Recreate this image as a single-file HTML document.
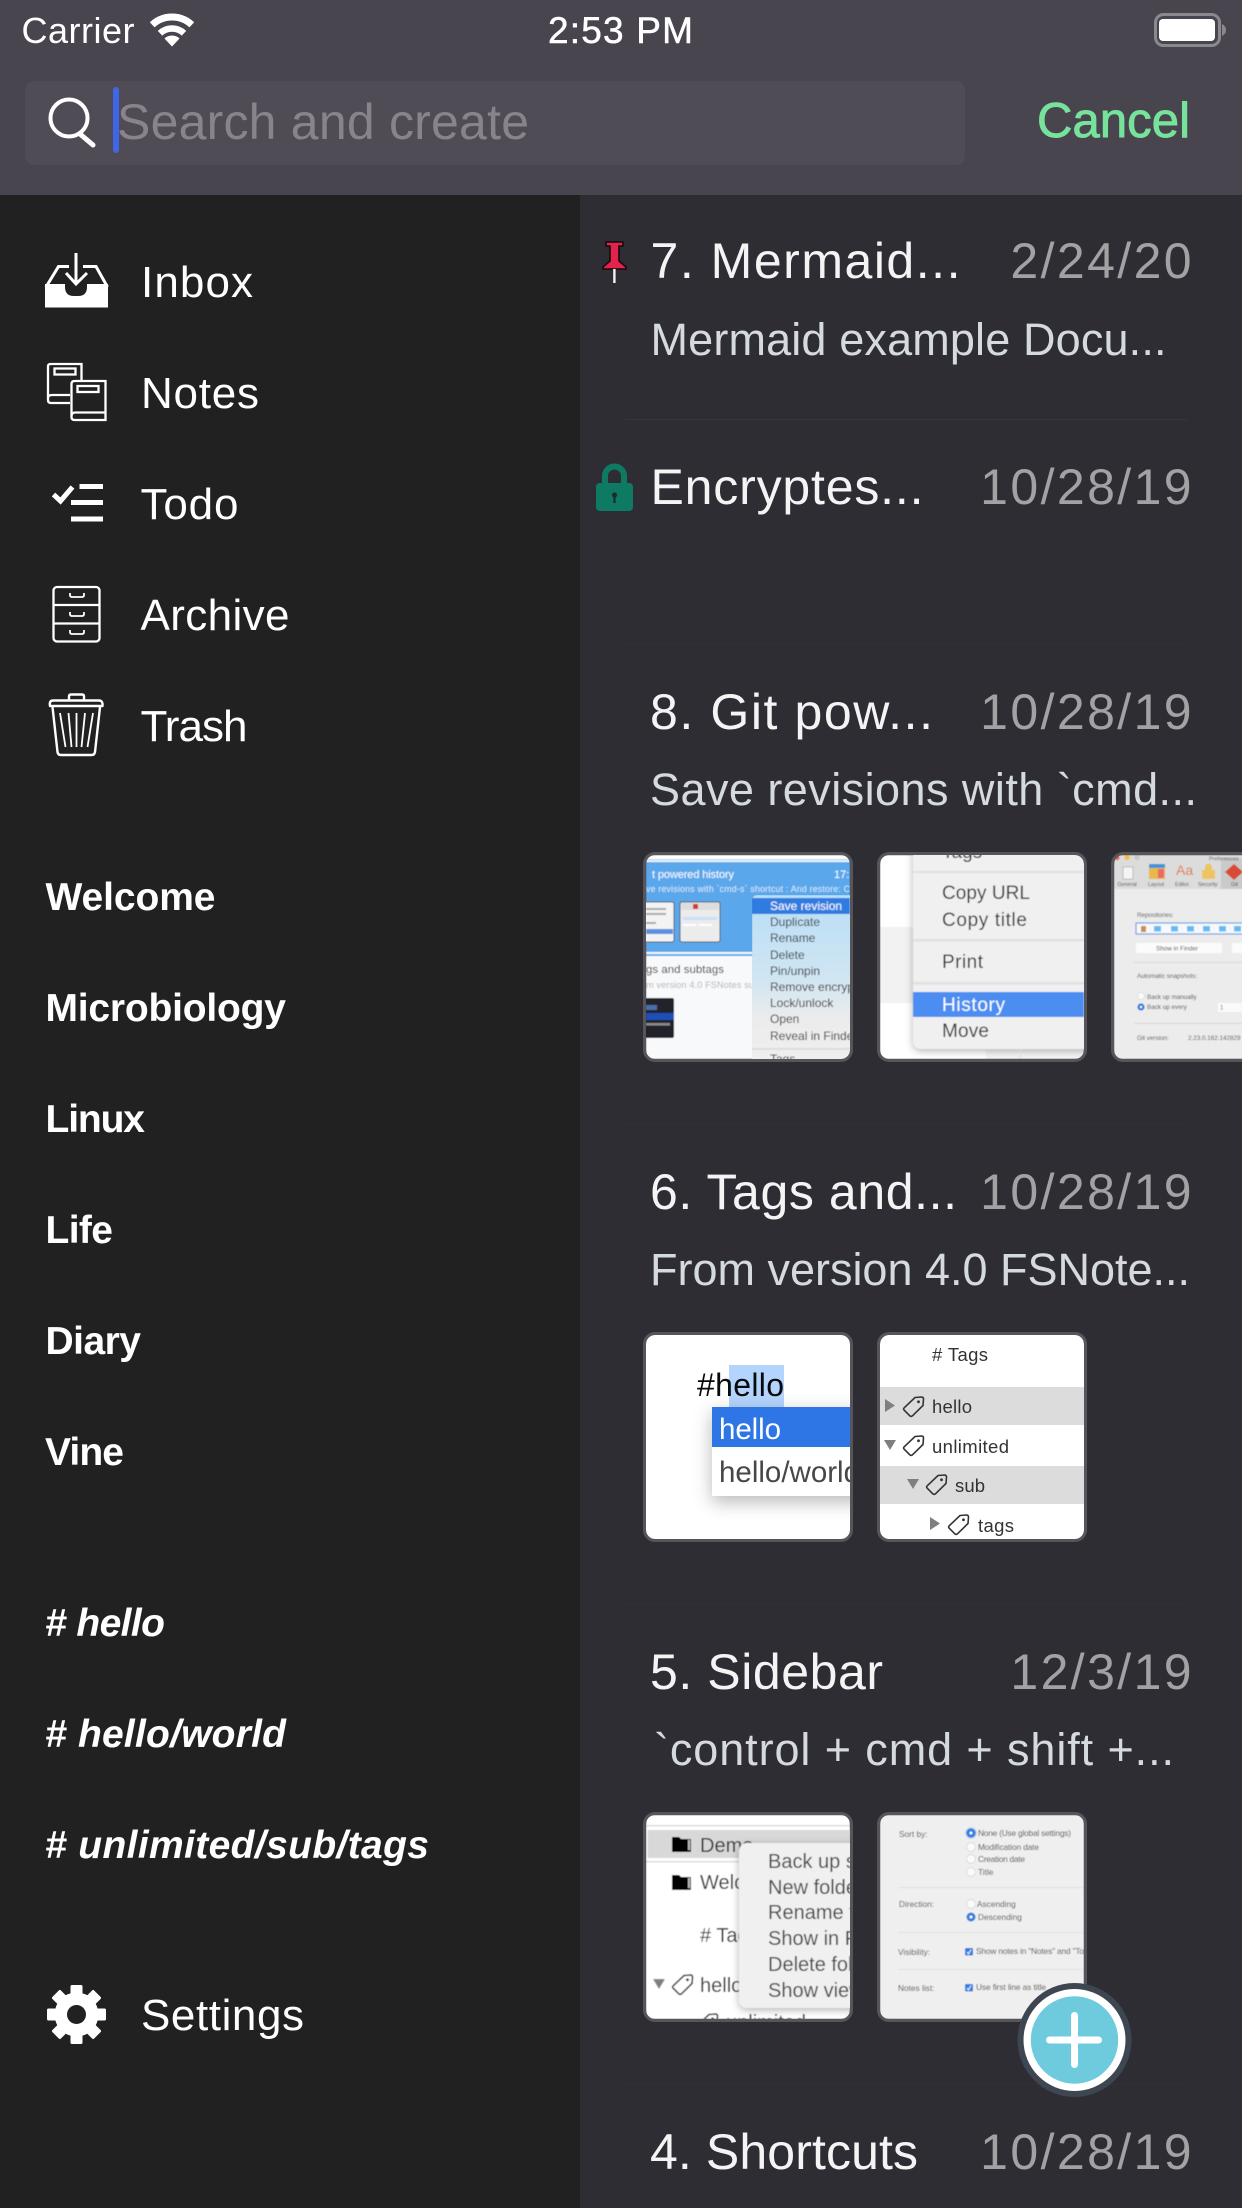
<!DOCTYPE html>
<html>
<head>
<meta charset="utf-8">
<title>Notes</title>
<style>
html,body{margin:0;padding:0;background:#2f2d34;width:1242px;height:2208px;overflow:hidden}
svg{display:block;font-family:"Liberation Sans",sans-serif}
.ti{font-size:50px;fill:#f4f4f5}
.da{font-size:50px;fill:#a2a2a4;text-anchor:end;letter-spacing:2.4px}
.pr{font-size:45px;fill:#d5dae0}
.nv{font-size:44px;fill:#fff}
.bd{font-size:39px;font-weight:700;fill:#fff}
.bi{font-size:39px;font-weight:700;font-style:italic;fill:#fff}
</style>
</head>
<body>
<svg width="1242" height="2208" viewBox="0 0 1242 2208" xmlns="http://www.w3.org/2000/svg">
<defs>
<clipPath id="tc"><rect width="204" height="204" rx="9"/></clipPath>
<filter id="b" x="0" y="0" width="100%" height="100%"><feGaussianBlur stdDeviation="0.45"/></filter>
<filter id="s" x="-40%" y="-40%" width="180%" height="180%"><feDropShadow dx="0" dy="6" stdDeviation="9" flood-color="#000" flood-opacity=".28"/></filter>
<filter id="s2" x="-40%" y="-40%" width="180%" height="180%"><feDropShadow dx="0" dy="2" stdDeviation="4" flood-color="#000" flood-opacity=".3"/></filter>
<g id="tag"><path d="M12 1.5 L18.5 1 Q20.5 1 20.5 3 L20 9.5 L9.5 19.8 Q8 21 6.8 19.8 L1.2 14.2 Q0 13 1.2 11.8 Z" fill="none" stroke="#333" stroke-width="1.6"/><circle cx="15.5" cy="5.8" r="1.4" fill="#333"/></g>
<g id="folder"><path d="M0 0 H7 L9 2 H19 V15 H0 Z" fill="#050505"/><path d="M16 3 H18 V13 H16 Z" fill="#bbb"/></g>
</defs>

<rect width="1242" height="2208" fill="#2f2d34"/>
<rect x="0" y="195" width="580" height="2013" fill="#212122"/>
<rect width="1242" height="195" fill="#48454f"/>

<!-- status bar -->
<text x="21.5" y="43" font-size="36" fill="#fff" textLength="113">Carrier</text>
<path d="M152.2 24.8 A29 29 0 0 1 191.8 24.8" fill="none" stroke="#fff" stroke-width="7"/>
<path d="M160 33.2 A17.5 17.5 0 0 1 184 33.2" fill="none" stroke="#fff" stroke-width="6.5"/>
<path d="M164.5 38.5 A11 11 0 0 1 179.5 38.5 L172 46.5 Z" fill="#fff"/>
<text x="548" y="43" font-size="37" fill="#fff" stroke="#fff" stroke-width=".5" textLength="145">2:53 PM</text>
<rect x="1155.5" y="14.5" width="64" height="31" rx="8" fill="none" stroke="#8b8990" stroke-width="3"/>
<rect x="1159" y="19" width="56" height="22" rx="4" fill="#fff"/>
<path d="M1222 24 Q1226 26 1226 30 Q1226 34 1222 36 Z" fill="#8b8990"/>

<!-- search -->
<rect x="25" y="81" width="940" height="84" rx="9" fill="#4f4c56"/>
<circle cx="69" cy="118" r="18.5" fill="none" stroke="#fff" stroke-width="4"/>
<path d="M80 134 L93 145" stroke="#fff" stroke-width="5" stroke-linecap="round"/>
<rect x="113" y="87" width="6" height="66" rx="3" fill="#3f66e6"/>
<text x="117" y="139" font-size="50" fill="#87858b" textLength="412">Search and create</text>
<text x="1037" y="137" font-size="49" fill="#77e29b" stroke="#77e29b" stroke-width=".9" textLength="153">Cancel</text>

<!-- sidebar icons -->
<g fill="none" stroke="#fff" stroke-width="3">
<path d="M46 287 L58.5 266.5 H69 M83 266.5 H96 L107.5 287"/>
<path d="M76 253 V284 M66 273 L76 284 L87 273"/>
</g>
<path d="M45 284 H65 V287 Q65 296 74 296 H78 Q87 296 87 287 V284 H108 V307.5 H45 Z" fill="#fff"/>
<g fill="none" stroke="#fff" stroke-width="2.3">
<path d="M81.5 380 V364 H50.5 Q48 364 48 366.5 V400 Q48 403 51 403 H70"/>
<path d="M48 398 Q48 395 52 395 H70"/>
<rect x="54.5" y="368.5" width="21" height="6"/>
<path d="M105.5 381 H74.5 Q71.5 381 71.5 384 V417 Q71.5 420 74.5 420 H105.5 Z"/>
<path d="M105.5 412.5 H75.5 Q71.5 412.5 71.5 416"/>
<rect x="77.5" y="386" width="21" height="6"/>
<rect x="53.5" y="587" width="46" height="54.5" rx="3.5"/>
<path d="M53.5 605 H99.5 M53.5 623.5 H99.5"/>
</g>
<g fill="none" stroke="#fff" stroke-width="1.8">
<path d="M70 593 V595 Q70 597 72 597 H82 Q84 597 84 595 V593"/>
<path d="M70 612 V614 Q70 616 72 616 H82 Q84 616 84 614 V612"/>
<path d="M70 630 V632 Q70 634 72 634 H82 Q84 634 84 632 V630"/>
</g>
<path d="M53.5 494.5 L60.5 501 L72.5 487" fill="none" stroke="#fff" stroke-width="5"/>
<rect x="79.5" y="484" width="23.5" height="5" fill="#fff"/>
<rect x="71" y="500" width="32" height="5" fill="#fff"/>
<rect x="71" y="516.5" width="32" height="5" fill="#fff"/>
<g fill="none" stroke="#fff" stroke-width="2.4" stroke-linejoin="round">
<path d="M69 700 V696.5 Q69 694.5 71 694.5 H82 Q84 694.5 84 696.5 V700"/>
<path d="M50 706 Q49 700.5 53 700.5 H99 Q103 700.5 102.5 706 Z"/>
<path d="M52.5 707 L57.5 752 Q58 755 61 755 H91.5 Q94.5 755 95 752 L100 707"/>
<path d="M60 713 L65.5 747 M68.5 713 L71.5 747 M76.5 713 V747 M85 713 L81.5 747 M93 713 L87.5 747" stroke-width="1.8"/>
</g>

<!-- nav labels -->
<text class="nv" x="141" y="297" textLength="112">Inbox</text>
<text class="nv" x="141" y="408" textLength="118">Notes</text>
<text class="nv" x="140.5" y="519" textLength="98">Todo</text>
<text class="nv" x="140.5" y="630" textLength="149">Archive</text>
<text class="nv" x="140.5" y="741" textLength="107">Trash</text>

<text class="bd" x="45.5" y="910" textLength="170">Welcome</text>
<text class="bd" x="45.5" y="1021" textLength="240.5">Microbiology</text>
<text class="bd" x="45.5" y="1132" textLength="99.5">Linux</text>
<text class="bd" x="45.5" y="1243" textLength="67.5">Life</text>
<text class="bd" x="45.5" y="1354" textLength="95.5">Diary</text>
<text class="bd" x="45" y="1465" textLength="79">Vine</text>

<text class="bi" x="45" y="1636" textLength="120">#  hello</text>
<text class="bi" x="45" y="1747" textLength="241">#  hello/world</text>
<text class="bi" x="45" y="1858" textLength="384">#  unlimited/sub/tags</text>

<!-- gear -->
<g fill="#fff">
<circle cx="76.5" cy="2014.5" r="22"/>
<rect x="70.5" y="1985" width="12" height="59" rx="1.5"/>
<rect x="70.5" y="1985" width="12" height="59" rx="1.5" transform="rotate(45 76.5 2014.5)"/>
<rect x="70.5" y="1985" width="12" height="59" rx="1.5" transform="rotate(90 76.5 2014.5)"/>
<rect x="70.5" y="1985" width="12" height="59" rx="1.5" transform="rotate(135 76.5 2014.5)"/>
</g>
<circle cx="76.5" cy="2014.5" r="9.5" fill="#212122"/>
<text class="nv" x="141" y="2030" textLength="163">Settings</text>

<!-- pin -->
<path d="M606 242 H623 V246 H619 V261 L626 267 V269 H603 V267 L610 261 V246 H606 Z" fill="#e4234c" stroke="#140a0d" stroke-width="1.6"/>
<rect x="613.2" y="269" width="2.4" height="14" fill="#f2f2f2"/>
<!-- lock -->
<path d="M605 484 V476 A9.5 9.5 0 0 1 624 476 V484" fill="none" stroke="#0e7a64" stroke-width="6"/>
<rect x="596" y="483" width="37" height="28" rx="4" fill="#0e7a64"/>
<circle cx="614.5" cy="495" r="2.6" fill="#1c2b2c"/>
<rect x="613.4" y="496" width="2.2" height="7" fill="#1c2b2c"/>

<!-- list text -->
<text class="ti" x="650.5" y="278" textLength="310">7. Mermaid...</text>
<text class="da" x="1194" y="278">2/24/20</text>
<text class="pr" x="650.5" y="355" textLength="516">Mermaid example Docu...</text>
<rect x="625" y="419" width="563" height="1" fill="#37353c"/>

<text class="ti" x="650.5" y="504" textLength="273">Encryptes...</text>
<text class="da" x="1194" y="504">10/28/19</text>
<rect x="625" y="644" width="563" height="1" fill="#333138"/>

<text class="ti" x="650" y="729" textLength="283">8. Git pow...</text>
<text class="da" x="1194" y="729">10/28/19</text>
<text class="pr" x="650" y="805" textLength="547">Save revisions with `cmd...</text>

<text class="ti" x="650" y="1209" textLength="307">6. Tags and...</text>
<text class="da" x="1194" y="1209">10/28/19</text>
<text class="pr" x="650" y="1285" textLength="540">From version 4.0 FSNote...</text>

<text class="ti" x="650" y="1689" textLength="233">5. Sidebar</text>
<text class="da" x="1194" y="1689">12/3/19</text>
<text class="pr" x="654" y="1765" textLength="520">`control + cmd + shift +...</text>

<text class="ti" x="650" y="2169" textLength="268">4. Shortcuts</text>
<text class="da" x="1194" y="2169">10/28/19</text>
<rect x="625" y="1124" width="563" height="1" fill="#333138"/>
<rect x="625" y="1604" width="563" height="1" fill="#333138"/>
<rect x="625" y="2084" width="563" height="1" fill="#333138"/>

<!-- THUMB row3 #1 -->
<g transform="translate(646,855)">
<g clip-path="url(#tc)"><g filter="url(#b)">
<rect width="204" height="204" fill="#f8f9fa"/>
<rect width="204" height="4" fill="#fff"/>
<rect y="4" width="204" height="1.5" fill="#bcd7ef"/>
<rect y="7" width="204" height="90" fill="#5aa7ec"/>
<rect y="99" width="204" height="2" fill="#5aa7ec"/>
<text x="6" y="23" font-size="11" fill="#fff" textLength="82">t powered history</text>
<text x="188" y="23" font-size="11" fill="#fff">17:</text>
<text x="0" y="37" font-size="8.8" fill="#d9ebfb" textLength="204">ve revisions with `cmd-s` shortcut : And restore: C</text>
<rect x="-5" y="47" width="33" height="40" rx="2" fill="#f3f3f3" stroke="#555" stroke-width="1"/>
<rect x="0" y="74" width="27" height="5" fill="#5a90e0"/>
<rect x="0" y="53" width="20" height="2" fill="#aaa"/><rect x="0" y="58" width="20" height="2" fill="#aaa"/><rect x="0" y="67" width="10" height="2" fill="#aaa"/>
<rect x="34" y="47" width="40" height="40" rx="2" fill="#ececec" stroke="#555" stroke-width="1"/>
<rect x="35" y="48" width="38" height="7" fill="#ddd"/><rect x="47" y="49" width="5" height="5" fill="#d33"/>
<rect x="37" y="62" width="34" height="3" fill="#cbe0f7"/><rect x="37" y="69" width="13" height="2" fill="#fff"/><rect x="53" y="69" width="13" height="2" fill="#fff"/>
<text x="0" y="118" font-size="11.4" fill="#2e2e2e" textLength="78">gs and subtags</text>
<text x="0" y="133" font-size="9.2" fill="#b4b4b4" textLength="108">m version 4.0 FSNotes su</text>
<rect x="-4" y="143" width="32" height="40" rx="2" fill="#23242a"/>
<rect x="0" y="158" width="28" height="7" fill="#1a4fb8"/>
<rect x="0" y="150" width="11" height="5" fill="#4a6ea8"/>
<rect x="0" y="168" width="24" height="2.5" fill="#888"/>
</g></g>
<g clip-path="url(#tc)"><g filter="url(#b)">
<defs><linearGradient id="mg" x1="0" y1="0" x2="0" y2="1"><stop offset="0" stop-color="#b9def6"/><stop offset=".45" stop-color="#cfe5f3"/><stop offset=".7" stop-color="#ececec"/><stop offset="1" stop-color="#efefef"/></linearGradient></defs>
<rect x="106" y="40" width="110" height="180" rx="5" fill="url(#mg)" filter="url(#s2)"/>
<rect x="106" y="43" width="98" height="16" fill="#2f7be0"/>
<text x="124" y="55" font-size="12" fill="#fff">Save revision</text>
<g font-size="12" fill="#333">
<text x="124" y="71">Duplicate</text>
<text x="124" y="87">Rename</text>
<text x="124" y="104">Delete</text>
<text x="124" y="120">Pin/unpin</text>
<text x="124" y="136">Remove encryption</text>
<text x="124" y="152">Lock/unlock</text>
<text x="124" y="168">Open</text>
<text x="124" y="185">Reveal in Finder</text>
<text x="124" y="208">Tags</text>
</g>
<rect x="106" y="193" width="98" height="2" fill="#dedede"/>
</g></g>
<rect x="-1.5" y="-1.5" width="207" height="207" rx="10.5" fill="none" stroke="#56555a" stroke-width="3"/>
</g>

<!-- THUMB row3 #2 -->
<g transform="translate(880,855)">
<g clip-path="url(#tc)"><g filter="url(#b)">
<rect width="204" height="204" fill="#fff"/>
<rect y="72" width="33" height="76" fill="#f2f2f2"/>
<rect x="106" y="195" width="98" height="9" fill="#f4f4f4"/>
<rect x="33" y="-20" width="190" height="214" rx="8" fill="#f0f0f0" filter="url(#s2)"/>
<g font-size="19" fill="#333">
<text x="62" y="3">Tags</text>
<text x="62" y="44" textLength="88">Copy URL</text>
<text x="62" y="71" textLength="85">Copy title</text>
<text x="62" y="113" textLength="41">Print</text>
<text x="62" y="182" textLength="47">Move</text>
</g>
<rect x="33" y="16" width="171" height="2" fill="#e0e0e0"/>
<rect x="33" y="84" width="171" height="2.5" fill="#e0e0e0"/>
<rect x="33" y="127" width="171" height="2.5" fill="#e0e0e0"/>
<rect x="33" y="137" width="171" height="25" fill="#4c8df0"/>
<text x="62" y="156" font-size="19" fill="#fff" textLength="63">History</text>
<rect x="140" y="194" width="1" height="10" fill="#ddd"/>
</g></g>
<rect x="-1.5" y="-1.5" width="207" height="207" rx="10.5" fill="none" stroke="#56555a" stroke-width="3"/>
</g>

<!-- THUMB row3 #3 -->
<g transform="translate(1114,855)">
<g clip-path="url(#tc)"><g filter="url(#b)">
<rect width="204" height="204" fill="#ececec"/>
<rect width="204" height="34" fill="#dcdcdc"/>
<rect x="107" y="3" width="30" height="31" fill="#cacaca"/>
<circle cx="3" cy="2.5" r="2.6" fill="#ee5c52"/><circle cx="13" cy="2.5" r="2.6" fill="#f5bc40"/><circle cx="23" cy="2.5" r="2.6" fill="#c8c8c8"/>
<text x="95" y="5.5" font-size="5.5" fill="#555">Preferences</text>
<rect x="9" y="12" width="10" height="12" fill="#f5f5f5" stroke="#aaa" stroke-width=".7"/>
<rect x="35" y="9" width="16" height="15" fill="#e8b94a"/><rect x="35" y="9" width="16" height="4" fill="#3d94d8"/><rect x="44" y="14" width="6" height="9" fill="#e96a60"/>
<text x="62" y="20" font-size="14" fill="#e07a3a">Aa</text>
<path d="M88 15 H101 V24 H88 Z M91 15 V12 A3.5 3.5 0 0 1 98 12 V15" fill="#edc561"/>
<path d="M120 9 L129 17 L120 25 L111 17 Z" fill="#d84a38"/>
<g font-size="5.4" fill="#4a4a4a">
<text x="3.5" y="31">General</text><text x="34" y="31">Layout</text><text x="61" y="31">Editor</text><text x="84" y="31">Security</text><text x="117" y="31">Git</text>
<text x="23" y="62" font-size="6.3">Repositories:</text>
<text x="23" y="123" font-size="6.3">Automatic snapshots:</text>
<text x="33" y="144" font-size="6.3">Back up manually</text>
<text x="33" y="154" font-size="6.3">Back up every</text>
<text x="23" y="185" font-size="6.3">Git version:</text>
<text x="74" y="185" font-size="6.3">2.23.0.162.142829</text>
</g>
<rect x="22" y="68" width="190" height="11" fill="#f8f8f8" stroke="#6ea2ea" stroke-width="1.2"/>
<path d="M27 71 h5 v6 h-5 z" fill="#c98c5a"/>
<rect x="40" y="71" width="7" height="5.5" fill="#64bdf0"/><rect x="57" y="71" width="7" height="5.5" fill="#64bdf0"/><rect x="73" y="71" width="7" height="5.5" fill="#64bdf0"/><rect x="89" y="71" width="7" height="5.5" fill="#64bdf0"/><rect x="105" y="71" width="7" height="5.5" fill="#64bdf0"/><rect x="120" y="71" width="7" height="5.5" fill="#64bdf0"/>
<rect x="22" y="88" width="86" height="10" rx="1.5" fill="#fbfbfb"/>
<rect x="118" y="88" width="40" height="10" rx="1.5" fill="#fbfbfb"/>
<text x="42" y="95.5" font-size="6.3" fill="#444">Show in Finder</text>
<rect x="20" y="107" width="184" height="1" fill="#d8d8d8"/>
<rect x="20" y="168" width="184" height="1" fill="#d8d8d8"/>
<circle cx="27" cy="141" r="3.6" fill="#fafafa" stroke="#ccc" stroke-width=".6"/>
<circle cx="27" cy="152" r="3.6" fill="#2f7be0"/><circle cx="27" cy="152" r="1.2" fill="#fff"/>
<rect x="104" y="148" width="24" height="9" fill="#fafafa"/>
<text x="106" y="154.5" font-size="6" fill="#444">1</text>
</g></g>
<rect x="-1.5" y="-1.5" width="207" height="207" rx="10.5" fill="none" stroke="#56555a" stroke-width="3"/>
</g>

<!-- THUMB row4 #1 -->
<g transform="translate(646,1335)">
<g clip-path="url(#tc)">
<rect width="204" height="204" fill="#fff"/>
<rect x="83" y="30" width="55" height="42" fill="#b3d4fd"/>
<text x="51" y="61" font-size="32" fill="#0a0a0a" textLength="87">#hello</text>
<rect x="66" y="72" width="160" height="89" fill="#fff" filter="url(#s)"/>
<rect x="66" y="72" width="160" height="40" fill="#2e75e6"/>
<text x="73" y="104" font-size="29.5" fill="#fff" textLength="62">hello</text>
<text x="73" y="147" font-size="29.5" fill="#474747">hello/world</text>
</g>
<rect x="-1.5" y="-1.5" width="207" height="207" rx="10.5" fill="none" stroke="#56555a" stroke-width="3"/>
</g>

<!-- THUMB row4 #2 -->
<g transform="translate(880,1335)">
<g clip-path="url(#tc)">
<rect width="204" height="204" fill="#fff"/>
<rect y="52" width="204" height="38" fill="#dcdcdc"/>
<rect y="131" width="204" height="38" fill="#dcdcdc"/>
<g font-size="18.5" fill="#333">
<text x="52" y="26" textLength="56">#  Tags</text>
<text x="52" y="78" textLength="40">hello</text>
<text x="52" y="118" textLength="77">unlimited</text>
<text x="75" y="157" textLength="30">sub</text>
<text x="98" y="197" textLength="36">tags</text>
</g>
<path d="M5 64 L15 70.5 L5 77 Z" fill="#7f7f7f"/>
<path d="M4 105 H16 L10 115 Z" fill="#7f7f7f"/>
<path d="M27 144 H39 L33 154 Z" fill="#7f7f7f"/>
<path d="M50 182 L60 188.5 L50 195 Z" fill="#7f7f7f"/>
<use href="#tag" x="23" y="61"/>
<use href="#tag" x="23" y="100"/>
<use href="#tag" x="46" y="139"/>
<use href="#tag" x="68" y="179"/>
</g>
<rect x="-1.5" y="-1.5" width="207" height="207" rx="10.5" fill="none" stroke="#56555a" stroke-width="3"/>
</g>

<!-- THUMB row5 #1 -->
<g transform="translate(646,1815)">
<g clip-path="url(#tc)"><g filter="url(#b)">
<rect width="204" height="204" fill="#fff"/>
<rect y="10" width="204" height="1.5" fill="#ddd"/>
<rect x="1.5" y="15" width="203" height="28" fill="#d8d8d8"/>
<rect y="46" width="204" height="1.5" fill="#ddd"/>
<use href="#folder" x="26" y="22"/>
<use href="#folder" x="26" y="60"/>
<g font-size="20" fill="#333">
<text x="54" y="37">Demo</text>
<text x="54" y="74">Welcome</text>
<text x="54" y="127"># Tags</text>
<text x="54" y="177">hello</text>
<text x="80" y="214">unlimited</text>
</g>
<path d="M7 164 H19 L13 174 Z" fill="#7f7f7f"/>
<use href="#tag" x="26" y="159"/>
<use href="#tag" x="51" y="198"/>
<rect x="93" y="28" width="130" height="165" rx="8" fill="#f0f0f0" filter="url(#s2)"/>
<g font-size="20" fill="#444">
<text x="122" y="53">Back up storage</text>
<text x="122" y="79">New folder</text>
<text x="122" y="104">Rename folder</text>
<text x="122" y="130">Show in Finder</text>
<text x="122" y="156">Delete folder</text>
<text x="122" y="182">Show view</text>
</g>
</g></g>
<rect x="-1.5" y="-1.5" width="207" height="207" rx="10.5" fill="none" stroke="#56555a" stroke-width="3"/>
</g>

<!-- THUMB row5 #2 -->
<g transform="translate(880,1815)">
<g clip-path="url(#tc)"><g filter="url(#b)">
<rect width="204" height="204" fill="#efefef"/>
<g font-size="8.3" fill="#4a4a4a">
<text x="19" y="22">Sort by:</text>
<text x="19" y="92">Direction:</text>
<text x="18" y="140">Visibility:</text>
<text x="18" y="176">Notes list:</text>
<text x="98" y="21" textLength="93">None (Use global settings)</text>
<text x="98" y="35" textLength="61">Modification date</text>
<text x="98" y="47" textLength="47">Creation date</text>
<text x="98" y="60">Title</text>
<text x="97" y="92">Ascending</text>
<text x="98" y="105">Descending</text>
<text x="96" y="139" textLength="108">Show notes in "Notes" and "To</text>
<text x="96" y="175" textLength="70">Use first line as title</text>
</g>
<g fill="#fafafa" stroke="#cfcfcf" stroke-width=".7">
<circle cx="91" cy="32" r="4.5"/><circle cx="91" cy="44" r="4.5"/><circle cx="91" cy="57" r="4.5"/><circle cx="91" cy="89" r="4.5"/>
</g>
<circle cx="91" cy="18" r="5.5" fill="#9cc4f5"/>
<circle cx="91" cy="18" r="4.5" fill="#2f7be0"/><circle cx="91" cy="18" r="1.5" fill="#fff"/>
<circle cx="91" cy="102" r="4.5" fill="#2f7be0"/><circle cx="91" cy="102" r="1.5" fill="#fff"/>
<rect x="85" y="133" width="8" height="7.5" rx="1" fill="#2f7be0"/>
<rect x="85" y="169" width="8" height="7.5" rx="1" fill="#2f7be0"/>
<path d="M87 137 L88.5 139 L91 134.5 M87 173 L88.5 175 L91 170.5" fill="none" stroke="#fff" stroke-width=".9"/>
<rect x="18" y="72" width="186" height="1" fill="#e0e0e0"/>
<rect x="18" y="117" width="186" height="1" fill="#e0e0e0"/>
<rect x="18" y="154" width="186" height="1" fill="#e0e0e0"/>
</g></g>
<rect x="-1.5" y="-1.5" width="207" height="207" rx="10.5" fill="none" stroke="#56555a" stroke-width="3"/>
</g>

<!-- FAB -->
<circle cx="1074.5" cy="2040" r="57" fill="#3e4651"/>
<circle cx="1074.5" cy="2040" r="51" fill="#fff"/>
<circle cx="1074.5" cy="2040" r="43.7" fill="#6ecbdd"/>
<rect x="1046" y="2036.5" width="56" height="7" rx="3.5" fill="#fff"/>
<rect x="1071" y="2012" width="7" height="56" rx="3.5" fill="#fff"/>
</svg>
</body>
</html>
